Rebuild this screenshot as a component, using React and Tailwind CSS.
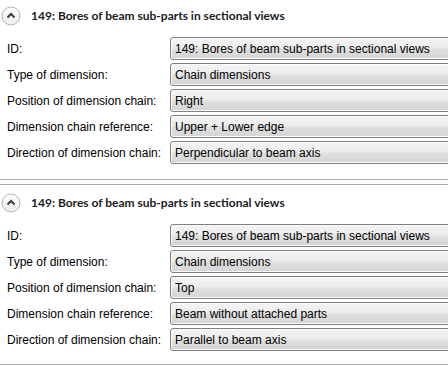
const rules = [
  {
    title: '149: Bores of beam sub-parts in sectional views',
    rows: [
      ['ID:', '149: Bores of beam sub-parts in sectional views'],
      ['Type of dimension:', 'Chain dimensions'],
      ['Position of dimension chain:', 'Right'],
      ['Dimension chain reference:', 'Upper + Lower edge'],
      ['Direction of dimension chain:', 'Perpendicular to beam axis'],
    ],
  },
  {
    title: '149: Bores of beam sub-parts in sectional views',
    rows: [
      ['ID:', '149: Bores of beam sub-parts in sectional views'],
      ['Type of dimension:', 'Chain dimensions'],
      ['Position of dimension chain:', 'Top'],
      ['Dimension chain reference:', 'Beam without attached parts'],
      ['Direction of dimension chain:', 'Parallel to beam axis'],
    ],
  },
];

function CollapseButton() {
  return (
    <svg width="20" height="20" viewBox="0 0 20 20" className="shrink-0">
      <defs>
        <linearGradient id="cb" x1="0" y1="0" x2="0" y2="1">
          <stop offset="0" stopColor="#ffffff" />
          <stop offset="1" stopColor="#ececec" />
        </linearGradient>
      </defs>
      <circle cx="10" cy="10" r="9" fill="url(#cb)" stroke="#b4b4b4" />
      <path d="M6.5 11.5 L10 8 L13.5 11.5" fill="none" stroke="#3c3c3c" strokeWidth="2" />
    </svg>
  );
}

function FieldRow({ label, value }) {
  return (
    <div className="flex items-center h-[23px]">
      <div className="w-[170px] shrink-0 pl-[7px] text-black">{label}</div>
      <div className="flex-1 h-full flex items-center pl-[4px] border border-[#7f7f7f] rounded-[3px] bg-[linear-gradient(to_bottom,#f4f4f4,#ececec_45%,#dfdfdf_55%,#d4d4d4)] shadow-[inset_0_0_0_1px_#fbfbfb] text-black">
        {value}
      </div>
    </div>
  );
}

function RuleSection({ rule, top, bottom, className }) {
  return (
    <div className={className} style={{ paddingTop: top, paddingBottom: bottom }}>
      <div className="flex items-center h-[22px] pl-[1px] gap-[10px]">
        <CollapseButton />
        <span className="font-bold text-[12px] text-[#1b1b1b] font-['Lato',sans-serif]">{rule.title}</span>
      </div>
      <div className="mt-[10px] flex flex-col gap-[3px] w-[470px]">
        {rule.rows.map(([label, value]) => (
          <FieldRow key={label} label={label} value={value} />
        ))}
      </div>
    </div>
  );
}

export default function App() {
  return (
    <div className="w-[448px] h-[366px] overflow-hidden bg-white text-[12px] font-['Liberation_Sans',sans-serif]">
      <RuleSection rule={rules[0]} top={5} bottom={15} className="border-b border-[#a9a9a9]" />
      <div className="h-[4px]" />
      <RuleSection rule={rules[1]} top={7} bottom={13} className="border-y border-[#a9a9a9]" />
    </div>
  );
}
